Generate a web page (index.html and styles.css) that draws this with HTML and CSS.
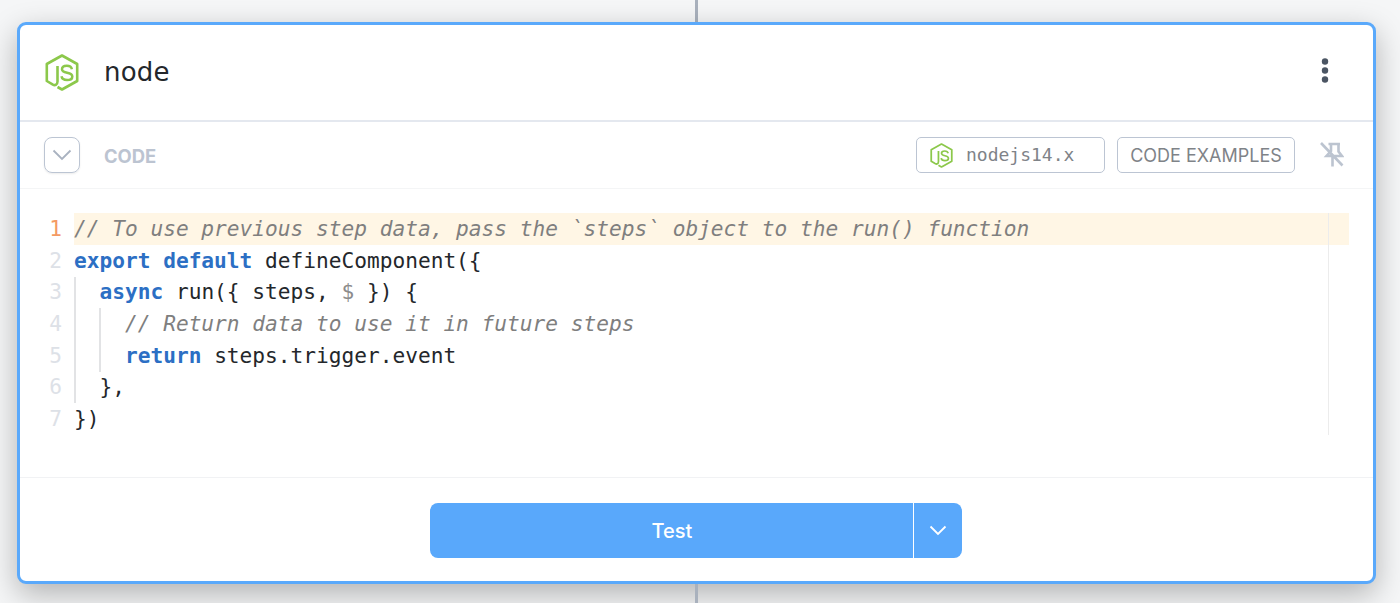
FILE: index.html
```html
<!DOCTYPE html>
<html lang="en">
<head>
<meta charset="utf-8">
<title>node</title>
<link rel="stylesheet" href="styles.css">
</head>
<body>
<svg class="defs" width="0" height="0" aria-hidden="true">
  <symbol id="njs" viewBox="0 0 34 37">
    <path d="M12.500 12V27.500C12.500 31 10 31.800 7.500 30.400L1.800 27V10L17 1.500 32.200 10V27L17 35.500 12.500 33" fill="none" stroke="currentColor" stroke-width="2.600" stroke-linejoin="round"/>
    <path d="M26.900 15.200C26.400 13 24.400 11.800 21.800 11.800 19 11.800 17 13.100 17 15.300 17 20.300 27.300 17.300 27.300 22.400 27.300 24.700 25.100 26 22.100 26 19 26 16.900 24.700 16.500 22.300" fill="none" stroke="currentColor" stroke-width="2.500"/>
  </symbol>
</svg>
<div class="stage">
  <div class="wire wire-top"></div>
  <section class="card">
    <header class="head">
      <svg class="logo"><use href="#njs"/></svg>
      <h1 class="title">node</h1>
      <svg class="more" viewBox="0 0 8 25"><circle cx="4" cy="3.500" r="3.200"/><circle cx="4" cy="12.500" r="3.200"/><circle cx="4" cy="21.500" r="3.200"/></svg>
    </header>
    <div class="bar">
      <span class="toggle"><svg viewBox="0 0 20 12"><path d="M1.500 1.500 10 10 18.500 1.500"/></svg></span>
      <span class="label">CODE</span>
      <span class="runtime"><svg class="rt-logo"><use href="#njs"/></svg><span>nodejs14.x</span></span>
      <span class="examples">CODE EXAMPLES</span>
      <svg class="pin" viewBox="0 0 24 26"><path d="M8.500 2H20M11 2V9L6.500 14H22L18.500 9.500V2M12.500 14V24.500M1 1 22.500 23.500"/></svg>
    </div>
    <div class="editor">
      <div class="code">
        <i class="guide guide-a"></i><i class="guide guide-b"></i><i class="ruler"></i>
        <div class="line hl"><span class="num cur">1</span><span class="src cm">// To use previous step data, pass the `steps` object to the run() function</span></div>
        <div class="line"><span class="num">2</span><span class="src"><b class="kw">export default</b> defineComponent({</span></div>
        <div class="line"><span class="num">3</span><span class="src">  <b class="kw">async</b> run({ steps, <span class="dim">$</span> }) {</span></div>
        <div class="line"><span class="num">4</span><span class="src cm">    // Return data to use it in future steps</span></div>
        <div class="line"><span class="num">5</span><span class="src">    <b class="kw">return</b> steps.trigger.event</span></div>
        <div class="line"><span class="num">6</span><span class="src">  },</span></div>
        <div class="line"><span class="num">7</span><span class="src">})</span></div>
      </div>
    </div>
    <footer class="foot">
      <div class="split">
        <span class="test">Test</span>
        <span class="caret"><svg viewBox="0 0 18 11"><path d="M1.500 1.500 9 9 16.500 1.500"/></svg></span>
      </div>
    </footer>
  </section>
  <div class="wire wire-bottom"></div>
</div>
</body>
</html>
```
FILE: styles.css
```css
* { box-sizing: border-box; }
html, body { margin: 0; height: 603px; overflow: hidden; }
body { background: #f5f6f7; font-family: "Inter", "Liberation Sans", sans-serif; }
.defs { position: absolute; }

.stage { width: 1400px; height: 603px; display: flex; flex-direction: column; padding-left: 17px; overflow: hidden; }
.wire { width: 3px; margin-left: 678px; background: #a9b1bd; flex: none; }
.wire-top { height: 22px; }
.wire-bottom { height: 19px; position: relative; z-index: 1; }

.card {
  width: 1359px; height: 562px; flex: none;
  background: #fff; border: 3px solid #5aa9fb; border-radius: 9px;
  box-shadow: 0 10px 30px rgba(0,0,0,.28);
  display: flex; flex-direction: column;
  position: relative;
}

.head { height: 97px; flex: none; display: flex; align-items: center; padding: 0 44px 1px 24px; border-bottom: 2px solid #e4e8ef; }
.logo { width: 34px; height: 37px; margin-left: 1px; color: #8cc84b; flex: none; }
.title { margin: 0 0 0 25px; flex: 1; font: 400 26px/1 "DejaVu Sans", sans-serif; color: #24272b; letter-spacing: .2px; }
.more { width: 8px; height: 25px; margin-bottom: 3px; fill: #4b5563; }

.bar { height: 67px; flex: none; display: flex; align-items: center; padding: 0 29px 0 24px; border-bottom: 1px solid #f4f5f6; }
.toggle { width: 36px; height: 36px; flex: none; border: 1px solid #bcc5d3; border-radius: 8px; display: flex; align-items: center; justify-content: center; box-shadow: 0 1px 2px rgba(0,0,0,.08); }
.toggle svg { width: 20px; height: 12px; fill: none; stroke: #a9b2c0; stroke-width: 1.800; }
.label { margin-left: 24px; padding-top: 2px; flex: 1; font: 700 18.400px/1 "Inter", sans-serif; color: #bcc4d1; }
.runtime { width: 189px; height: 36px; flex: none; display: flex; align-items: center; padding-left: 13px; border: 1px solid #bcc5d3; border-radius: 5px; font: 400 18px/1 "DejaVu Sans Mono", monospace; color: #7f8388; }
.rt-logo { width: 23px; height: 25px; color: #8cc84b; margin-right: 13px; flex: none; }
.examples { width: 178px; height: 36px; margin-left: 12px; padding-top: 2px; flex: none; display: flex; align-items: center; justify-content: center; border: 1px solid #bcc5d3; border-radius: 5px; font: 400 18px/1 "Inter", sans-serif; color: #7f8388; }
.pin { width: 24px; height: 26px; margin-left: 25px; flex: none; fill: none; stroke: #bcc4d0; stroke-width: 2.600; }

.editor { height: 289px; flex: none; padding: 24px 24px 0 54px; border-bottom: 1px solid #f1f2f4; }
.code { position: relative; height: 222px; font: 400 21.170px/31.700px "DejaVu Sans Mono", monospace; color: #24272b; }
.line { height: 31.700px; white-space: pre; display: flex; }
.num { position: absolute; left: -28px; width: 16px; text-align: right; color: #dde1e7; }
.num.cur { color: #f49a63; }
.src { display: block; }
.hl { background: #fff6e5; }
.cm { color: #7f7f7f; font-style: italic; }
.kw { color: #2c6fc4; font-weight: 700; }
.dim { color: #8c8c8c; }
.guide { position: absolute; width: 2px; background: #e2e3e5; }
.guide-a { left: 0; top: 64px; height: 126px; }
.guide-b { left: 25px; top: 95px; height: 64px; }
.ruler { position: absolute; left: 1254px; top: 0; width: 1px; height: 222px; background: #ececec; }

.foot { flex: 1; display: flex; justify-content: center; padding: 25px 2px 0 0; }
.split { width: 532px; height: 55px; display: flex; background: #59a8fb; border-radius: 8px; color: #fff; }
.test { flex: 1; padding: 1px 0 0 2px; display: flex; align-items: center; justify-content: center; font: 500 20px/1 "Inter", sans-serif; }
.caret { width: 49px; border-left: 1px solid #fff; display: flex; align-items: center; justify-content: center; }
.caret svg { width: 18px; height: 11px; fill: none; stroke: #fff; stroke-width: 1.800; }
```
